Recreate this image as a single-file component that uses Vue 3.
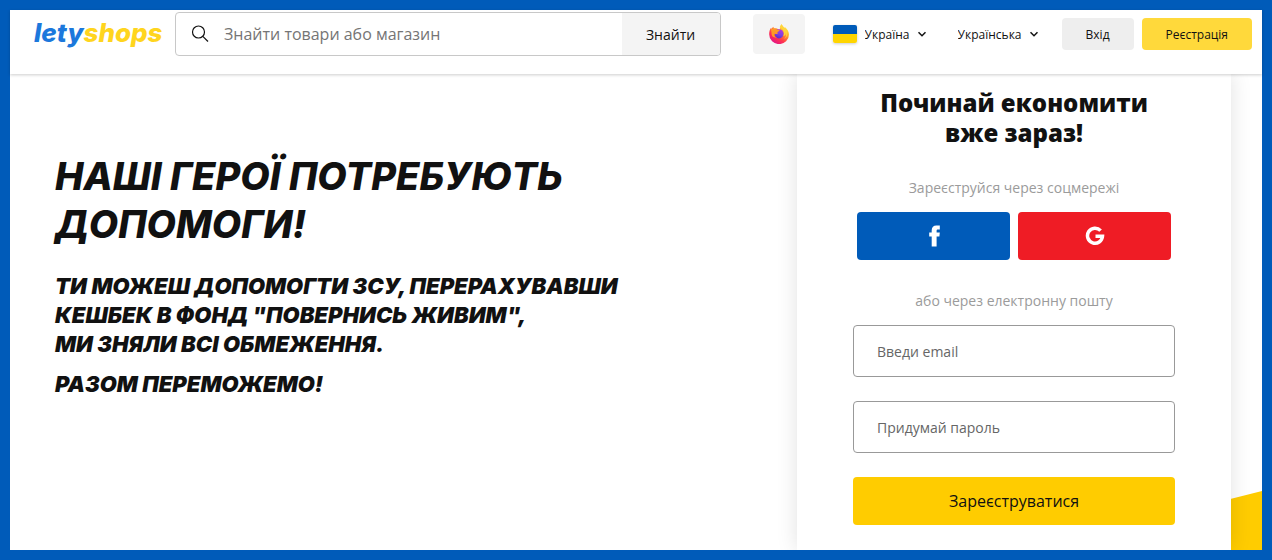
<script setup>
import { ref } from 'vue'

const query = ref('')
const email = ref('')
const password = ref('')
const country = ref('ua')
const language = ref('uk')
</script>

<template>
  <div class="page">
    <header class="header">
      <a class="logo" href="#" aria-label="letyshops"><span>lety</span><span class="logo-accent">shops</span></a>

      <form class="search" role="search" @submit.prevent>
        <svg class="search-icon" viewBox="0 0 18 18" aria-hidden="true">
          <circle cx="7.500" cy="7" r="6" />
          <path d="M11.800 11.300L17 16.500" />
        </svg>
        <input v-model="query" type="search" aria-label="Пошук" placeholder="Знайти товари або магазин" />
        <button type="submit">Знайти</button>
      </form>

      <button class="extension" type="button" aria-label="Firefox">
        <svg viewBox="0 0 20 20" aria-hidden="true">
          <defs>
            <linearGradient id="fox" x1="0.85" y1="0.1" x2="0.25" y2="0.95">
              <stop offset="0" stop-color="#fff044" />
              <stop offset="0.3" stop-color="#ffb52b" />
              <stop offset="0.5" stop-color="#ff6b36" />
              <stop offset="0.7" stop-color="#ff3350" />
              <stop offset="1" stop-color="#e31587" />
            </linearGradient>
            <linearGradient id="globe" x1="0.7" y1="0" x2="0.3" y2="1">
              <stop offset="0" stop-color="#b833e1" />
              <stop offset="0.5" stop-color="#8244e0" />
              <stop offset="1" stop-color="#592acb" />
            </linearGradient>
          </defs>
          <path fill="url(#fox)" d="M12.500 0c.4 1.600 1.600 2.700 2.700 3.900l.7-1c2.500 2.100 4.100 4.600 4.100 7.500A9.900 9.700 0 0 1 .2 10.400C.1 7.700.8 5.500 2.100 3.700l.2 1.200C2.900 3.900 3.500 3.200 4.500 2.700l.3 1.800c1.100-.4 2.300-.3 3.200.1l2.500 1.200z" />
          <circle cx="10" cy="9.800" r="4.600" fill="url(#globe)" />
          <path fill="#ff9a26" d="M1.800 5.500c2-1.400 4.300-1.200 6 .4l2.800.2c.1.900-.9 1.300-2 1.800-.5.600-.1 1.200.6 1.400-1 .9-2.200.6-3.500.4-.9 1.900.4 3.300 2.300 3.500-2.500 1-5-.3-5.400-3-.2-1.600.1-3-.8-4.700z" />
          <path fill="#ffd43d" d="M10.800 3.600c4 1.500 5.100 5.300 3.600 8.500 2.100-.7 2.800-2.500 2.400-4.700 1.100 3.200.3 6-1.900 7.800 4.200-2 4.500-7.600.5-11.100L12.500.3c-1 .9-1.600 2.100-1.700 3.300z" />
        </svg>
      </button>

      <label class="picker country">
        <span class="flag" aria-hidden="true"></span>
        <select v-model="country" aria-label="Країна"><option value="ua">Україна</option></select>
        <svg class="chevron" viewBox="0 0 8 6" aria-hidden="true"><path d="M.5 1.200L4 4.700l3.500-3.500" /></svg>
      </label>

      <label class="picker language">
        <select v-model="language" aria-label="Мова"><option value="uk">Українська</option></select>
        <svg class="chevron" viewBox="0 0 8 6" aria-hidden="true"><path d="M.5 1.200L4 4.700l3.500-3.500" /></svg>
      </label>

      <div class="account">
        <button type="button">Вхід</button>
        <button type="button" class="primary">Реєстрація</button>
      </div>
    </header>

    <main class="hero">
      <svg class="shape" viewBox="0 0 400 160" aria-hidden="true"><path d="M400 0V160H0V101Z" /></svg>

      <section class="intro">
        <h1>НАШІ ГЕРОЇ ПОТРЕБУЮТЬ<br />ДОПОМОГИ!</h1>
        <p>ТИ МОЖЕШ ДОПОМОГТИ ЗСУ, ПЕРЕРАХУВАВШИ<br />КЕШБЕК В ФОНД "ПОВЕРНИСЬ ЖИВИМ",<br />МИ ЗНЯЛИ ВСІ ОБМЕЖЕННЯ.</p>
        <p>РАЗОМ ПЕРЕМОЖЕМО!</p>
      </section>

      <form class="signup" @submit.prevent>
        <h2>Починай економити<br />вже зараз!</h2>
        <p class="hint">Зареєструйся через соцмережі</p>
        <div class="social">
          <button type="button" aria-label="Facebook">
            <svg class="facebook" viewBox="0 0 12 22" aria-hidden="true">
              <path d="M3.700 21.500V11.500H1.200V7.500H3.700V5.200C3.700 2.200 5.500.4 8.400.4H11.800v4H10C9 4.400 8.600 4.900 8.600 5.800v1.700H11.800L11.400 11.500H8.600v10z" />
            </svg>
          </button>
          <button type="button" class="google" aria-label="Google">
            <svg viewBox="0 0 20 20" aria-hidden="true">
              <path d="M15.600 4.700A7.500 7.500 0 1 0 17.500 10.200H10.500" />
            </svg>
          </button>
        </div>
        <p class="hint">або через електронну пошту</p>
        <input v-model="email" type="email" aria-label="Email" placeholder="Введи email" />
        <input v-model="password" type="password" aria-label="Пароль" placeholder="Придумай пароль" />
        <button class="submit" type="submit">Зареєструватися</button>
      </form>
    </main>
  </div>
</template>

<style>
body {
  margin: 0;
}
</style>

<style scoped>
* {
  box-sizing: border-box;
}

.page {
  display: flex;
  flex-direction: column;
  min-height: 100vh;
  border: 10px solid #005bb9;
  background: #fff;
  color: #111;
  font-family: "Open Sans", sans-serif;
}

button,
input,
select {
  margin: 0;
  border: 0;
  color: inherit;
  font: inherit;
}

button {
  padding: 0;
  border-radius: 4px;
  cursor: pointer;
}

.header {
  position: relative;
  z-index: 2;
  display: flex;
  align-items: center;
  padding: 2px 10px 18px 24px;
  background: #fff;
  box-shadow: 0 1px 3px rgba(0, 0, 0, 0.2);
  font-size: 12px;
}

.logo {
  width: 125px;
  margin-right: 16px;
  padding-bottom: 2px;
  color: #1c78dc;
  font: italic 800 26px/40px Inter, sans-serif;
  text-decoration: none;
}

.logo-accent {
  color: #ffd51e;
}

.search {
  display: flex;
  flex: 1;
  align-items: center;
  height: 44px;
  margin-right: 32px;
  overflow: hidden;
  border: 1px solid #c8c8c8;
  border-radius: 4px;
  font-size: 16px;
}

.search-icon {
  flex: none;
  width: 18px;
  margin: 0 15px;
  fill: none;
  stroke: #111;
  stroke-width: 1.2;
}

.search input {
  flex: 1;
  min-width: 0;
  height: 100%;
  padding: 0;
  outline: 0;
  appearance: none;
}

.search input::placeholder {
  color: #757575;
}

.search button {
  width: 98px;
  height: 100%;
  border-radius: 0;
  background: #f4f4f4;
  font-size: 14px;
}

.extension {
  display: flex;
  align-items: center;
  justify-content: center;
  width: 52px;
  height: 40px;
  margin-right: 28px;
  background: #f4f4f4;
}

.extension svg {
  width: 20px;
}

.picker {
  display: flex;
  gap: 8px;
  align-items: center;
}

.picker select {
  padding: 0;
  background: none;
  appearance: none;
}

.country {
  margin-right: 32px;
}

.language {
  margin-right: 24px;
}

.flag {
  width: 24px;
  height: 18px;
  border-radius: 2px;
  background: linear-gradient(#005bb9 50%, #ffd500 50%);
  box-shadow: 0 1px 3px rgba(0, 0, 0, 0.2);
}

.chevron {
  width: 8px;
  fill: none;
  stroke: #111;
  stroke-width: 1.5;
}

.account {
  display: flex;
  gap: 8px;
}

.account button {
  height: 32px;
  padding: 0 24px;
  background: #eee;
}

.account .primary {
  background: #ffd93b;
}

.hero {
  position: relative;
  display: flex;
  flex: 1;
  justify-content: space-between;
  padding: 0 31px 0 45px;
  overflow: hidden;
}

.shape {
  position: absolute;
  right: 0;
  bottom: -101px;
  width: 400px;
  fill: #fc0;
}

.intro {
  padding-top: 78px;
  font-family: Inter, sans-serif;
  font-style: italic;
  font-weight: 900;
}

.intro h1 {
  margin: 0 0 24px;
  font-size: 38px;
  font-weight: 800;
  line-height: 48px;
}

.intro p {
  margin: 0 0 11px;
  font-size: 22px;
  line-height: 29px;
}

.signup {
  position: relative;
  display: flex;
  flex-direction: column;
  width: 434px;
  padding: 14px 56px 25px;
  background: #fff;
  box-shadow: 0 0 20px rgba(0, 0, 0, 0.12);
  font-size: 14px;
}

.signup h2 {
  margin: 0 0 30px;
  font-size: 24px;
  font-weight: 800;
  line-height: 30px;
  text-align: center;
}

.hint {
  margin: 0 0 14px;
  color: #9b9b9b;
  line-height: 20px;
  text-align: center;
}

.social {
  display: flex;
  gap: 8px;
  margin: 0 4px 31px;
}

.social button {
  display: flex;
  flex: 1;
  align-items: center;
  justify-content: center;
  height: 48px;
  background: #005bb9;
}

.social .google {
  background: #ef1c25;
}

.social svg {
  width: 20px;
}

.social .facebook {
  width: 12px;
  fill: #fff;
}

.google path {
  fill: none;
  stroke: #fff;
  stroke-width: 3.5;
}

.signup input {
  height: 52px;
  margin-bottom: 24px;
  padding: 0 23px;
  border: 1px solid #999;
  border-radius: 4px;
}

.signup input::placeholder {
  color: #666;
}

.submit {
  height: 48px;
  background: #fc0;
  font-size: 16px;
}
</style>
